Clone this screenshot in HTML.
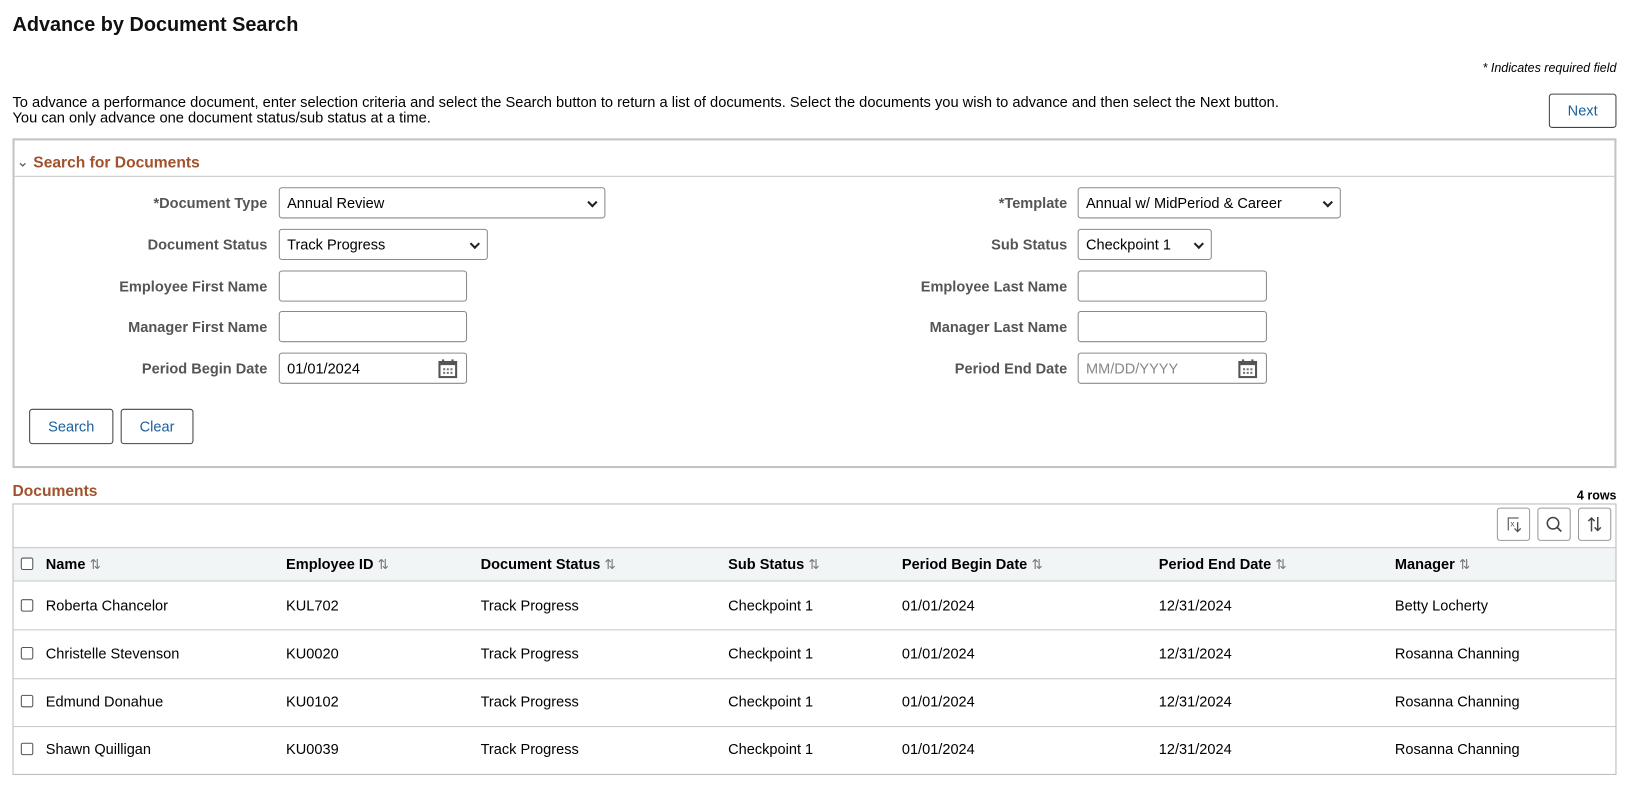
<!DOCTYPE html>
<html><head><meta charset="utf-8"><style>
*{box-sizing:border-box;margin:0;padding:0}
html,body{width:1631px;height:794px;overflow:hidden;background:#fff}
#w{position:absolute;left:0;top:0;width:1568px;height:764px;transform:scale(1.0402);transform-origin:0 0;font-family:"Liberation Sans",Arial,sans-serif;color:#000;font-size:14px}
.a{position:absolute;white-space:nowrap}
.lbl{position:absolute;font-weight:bold;color:#555;font-size:14px;text-align:right;white-space:nowrap}
.inp{position:absolute;height:30px;border:1px solid #8a8a8a;border-radius:3px;background:#fff;font-size:14px;padding:0 7px;line-height:28px;color:#000}
.sel::after{content:"";position:absolute;right:8px;top:10px;width:5px;height:5px;border-right:2px solid #222;border-bottom:2px solid #222;transform:rotate(45deg)}
.btn{position:absolute;border:1px solid #444;border-radius:3px;background:#fff;color:#1a5fa0;font-size:14px;text-align:center}
.ib{position:absolute;top:488px;width:32px;height:32px;border:1px solid #999;border-radius:3px;background:#fff}
.hd{position:absolute;top:534px;font-weight:bold;font-size:14px;white-space:nowrap}
.hd i{font-style:normal;font-weight:normal;color:#777;font-size:13px;margin-left:4px}
.cell{position:absolute;font-size:14px;white-space:nowrap}
.cb{position:absolute;left:20px;width:12px;height:12px;border:1px solid #555;border-radius:2px;background:#fff}
.hl{position:absolute;left:12px;width:1541px;height:1px;background:#c8c8c8}
.cal{position:absolute;right:8px;top:5px}
</style></head><body><div id="w">
<div class="a" style="left:12px;top:14px;font-size:19.1px;font-weight:bold;color:#111">Advance by Document Search</div>
<div class="a" style="right:14px;top:58px;font-size:12px;font-style:italic">* Indicates required field</div>
<div class="a" style="left:12px;top:91px;font-size:14.1px;line-height:15px">To advance a performance document, enter selection criteria and select the Search button to return a list of documents. Select the documents you wish to advance and then select the Next button.<br>You can only advance one document status/sub status at a time.</div>
<div class="btn" style="left:1489px;top:90px;width:65px;height:33px;line-height:31px">Next</div>

<div class="a" style="left:12px;top:133px;width:1542px;height:317px;border:2px solid #c4c4c4"></div>
<div class="a" style="left:14px;top:169px;width:1538px;height:1px;background:#c8c8c8"></div>
<div class="a" style="left:16px;top:147px;font-size:14px;color:#555">&#8964;</div>
<div class="a" style="left:32px;top:148px;font-size:15px;font-weight:bold;color:#a0522d">Search for Documents</div>

<div class="lbl" style="right:1311px;top:187px">*Document Type</div>
<div class="inp sel" style="left:268px;top:180px;width:314px">Annual Review</div>
<div class="lbl" style="right:1311px;top:227px">Document Status</div>
<div class="inp sel" style="left:268px;top:220px;width:201px">Track Progress</div>
<div class="lbl" style="right:1311px;top:267px">Employee First Name</div>
<div class="inp" style="left:268px;top:260px;width:181px"></div>
<div class="lbl" style="right:1311px;top:306px">Manager First Name</div>
<div class="inp" style="left:268px;top:299px;width:181px"></div>
<div class="lbl" style="right:1311px;top:346px">Period Begin Date</div>
<div class="inp" style="left:268px;top:339px;width:181px">01/01/2024<svg class="cal" width="19" height="19" viewBox="0 0 19 19"><rect x="1.5" y="3" width="16" height="14.5" fill="none" stroke="#555" stroke-width="2"/><rect x="1.5" y="3" width="16" height="3" fill="#555"/><rect x="4" y="0.5" width="2" height="4" fill="#555"/><rect x="13" y="0.5" width="2" height="4" fill="#555"/><g fill="#777"><rect x="5" y="9" width="2" height="2"/><rect x="8.5" y="9" width="2" height="2"/><rect x="12" y="9" width="2" height="2"/><rect x="5" y="12.5" width="2" height="2"/><rect x="8.5" y="12.5" width="2" height="2"/><rect x="12" y="12.5" width="2" height="2"/></g></svg></div>

<div class="lbl" style="right:542px;top:187px">*Template</div>
<div class="inp sel" style="left:1036px;top:180px;width:253px">Annual w/ MidPeriod &amp; Career</div>
<div class="lbl" style="right:542px;top:227px">Sub Status</div>
<div class="inp sel" style="left:1036px;top:220px;width:129px">Checkpoint 1</div>
<div class="lbl" style="right:542px;top:267px">Employee Last Name</div>
<div class="inp" style="left:1036px;top:260px;width:182px"></div>
<div class="lbl" style="right:542px;top:306px">Manager Last Name</div>
<div class="inp" style="left:1036px;top:299px;width:182px"></div>
<div class="lbl" style="right:542px;top:346px">Period End Date</div>
<div class="inp" style="left:1036px;top:339px;width:182px;color:#888">MM/DD/YYYY<svg class="cal" width="19" height="19" viewBox="0 0 19 19"><rect x="1.5" y="3" width="16" height="14.5" fill="none" stroke="#555" stroke-width="2"/><rect x="1.5" y="3" width="16" height="3" fill="#555"/><rect x="4" y="0.5" width="2" height="4" fill="#555"/><rect x="13" y="0.5" width="2" height="4" fill="#555"/><g fill="#777"><rect x="5" y="9" width="2" height="2"/><rect x="8.5" y="9" width="2" height="2"/><rect x="12" y="9" width="2" height="2"/><rect x="5" y="12.5" width="2" height="2"/><rect x="8.5" y="12.5" width="2" height="2"/><rect x="12" y="12.5" width="2" height="2"/></g></svg></div>

<div class="btn" style="left:28px;top:393px;width:81px;height:34px;line-height:32px">Search</div>
<div class="btn" style="left:116px;top:393px;width:70px;height:34px;line-height:32px">Clear</div>

<div class="a" style="left:12px;top:464px;font-size:15px;font-weight:bold;color:#a0522d">Documents</div>
<div class="a" style="right:14px;top:469px;font-size:12px;font-weight:bold">4 rows</div>
<div class="a" style="left:12px;top:484px;width:1542px;height:261px;border:1px solid #bbb"></div>
<div class="ib" style="left:1439px"><svg width="30" height="30" viewBox="0 0 30 30"><path d="M10 21V9h10" fill="none" stroke="#666" stroke-width="1.2"/><text x="12" y="17" font-size="8" fill="#555" font-family="Liberation Sans">x</text><path d="M19 13v9M16 19l3 3 3-3" fill="none" stroke="#555" stroke-width="1.3"/></svg></div>
<div class="ib" style="left:1478px"><svg width="30" height="30" viewBox="0 0 30 30"><circle cx="14" cy="14" r="5.5" fill="none" stroke="#444" stroke-width="1.5"/><path d="M18 18l4 4" stroke="#444" stroke-width="1.6"/></svg></div>
<div class="ib" style="left:1517px"><svg width="30" height="30" viewBox="0 0 30 30"><path d="M12 22V9M9 12l3-3 3 3M18 8v13M15 18l3 3 3-3" fill="none" stroke="#444" stroke-width="1.4"/></svg></div>

<div class="a" style="left:13px;top:526px;width:1540px;height:32px;background:#f2f5f6;border-top:1px solid #c8c8c8"></div>
<div class="hl" style="top:558px"></div>
<div class="cb" style="top:536px"></div>
<div class="hd" style="left:44px">Name<i>⇅</i></div>
<div class="hd" style="left:275px">Employee ID<i>⇅</i></div>
<div class="hd" style="left:462px">Document Status<i>⇅</i></div>
<div class="hd" style="left:700px">Sub Status<i>⇅</i></div>
<div class="hd" style="left:867px">Period Begin Date<i>⇅</i></div>
<div class="hd" style="left:1114px">Period End Date<i>⇅</i></div>
<div class="hd" style="left:1341px">Manager<i>⇅</i></div>

<div class="cb" style="top:576px"></div>
<div class="cell" style="left:44px;top:574px">Roberta Chancelor</div><div class="cell" style="left:275px;top:574px">KUL702</div><div class="cell" style="left:462px;top:574px">Track Progress</div><div class="cell" style="left:700px;top:574px">Checkpoint 1</div><div class="cell" style="left:867px;top:574px">01/01/2024</div><div class="cell" style="left:1114px;top:574px">12/31/2024</div><div class="cell" style="left:1341px;top:574px">Betty Locherty</div>
<div class="hl" style="top:605px"></div>
<div class="cb" style="top:622px"></div>
<div class="cell" style="left:44px;top:620px">Christelle Stevenson</div><div class="cell" style="left:275px;top:620px">KU0020</div><div class="cell" style="left:462px;top:620px">Track Progress</div><div class="cell" style="left:700px;top:620px">Checkpoint 1</div><div class="cell" style="left:867px;top:620px">01/01/2024</div><div class="cell" style="left:1114px;top:620px">12/31/2024</div><div class="cell" style="left:1341px;top:620px">Rosanna Channing</div>
<div class="hl" style="top:652px"></div>
<div class="cb" style="top:668px"></div>
<div class="cell" style="left:44px;top:666px">Edmund Donahue</div><div class="cell" style="left:275px;top:666px">KU0102</div><div class="cell" style="left:462px;top:666px">Track Progress</div><div class="cell" style="left:700px;top:666px">Checkpoint 1</div><div class="cell" style="left:867px;top:666px">01/01/2024</div><div class="cell" style="left:1114px;top:666px">12/31/2024</div><div class="cell" style="left:1341px;top:666px">Rosanna Channing</div>
<div class="hl" style="top:698px"></div>
<div class="cb" style="top:714px"></div>
<div class="cell" style="left:44px;top:712px">Shawn Quilligan</div><div class="cell" style="left:275px;top:712px">KU0039</div><div class="cell" style="left:462px;top:712px">Track Progress</div><div class="cell" style="left:700px;top:712px">Checkpoint 1</div><div class="cell" style="left:867px;top:712px">01/01/2024</div><div class="cell" style="left:1114px;top:712px">12/31/2024</div><div class="cell" style="left:1341px;top:712px">Rosanna Channing</div>
</div></body></html>
